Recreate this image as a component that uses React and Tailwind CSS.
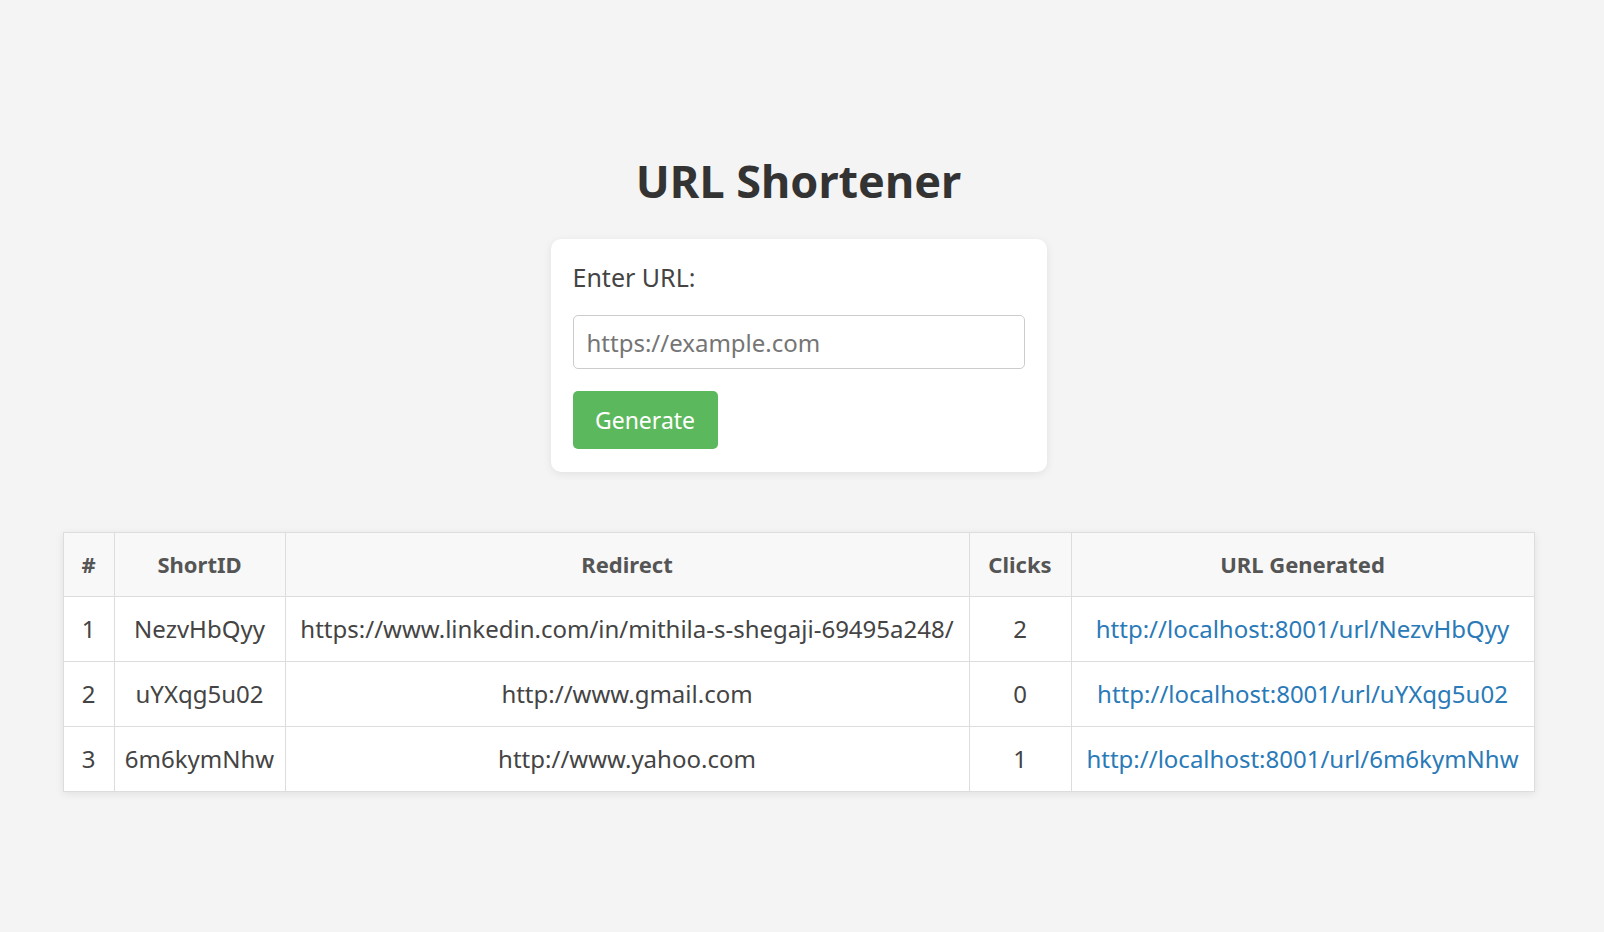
import { useState } from 'react';

const rows = [
  { id: 1, shortId: 'NezvHbQyy', redirect: 'https://www.linkedin.com/in/mithila-s-shegaji-69495a248/', clicks: 2 },
  { id: 2, shortId: 'uYXqg5u02', redirect: 'http://www.gmail.com', clicks: 0 },
  { id: 3, shortId: '6m6kymNhw', redirect: 'http://www.yahoo.com', clicks: 1 },
];

export default function App() {
  const [url, setUrl] = useState('');

  return (
    <div className="min-h-screen bg-[#f4f4f4] text-[#444] font-['Noto_Sans',sans-serif] pt-[153px] pr-[7px]">
      <h1 className="text-center text-[45px] leading-[56px] font-bold text-[#333]">URL Shortener</h1>

      <form
        className="w-[496px] mx-auto mt-[30px] bg-white rounded-[10px] px-[22px] pt-[22px] pb-[23px] shadow-[0_2px_8px_rgba(0,0,0,0.08)]"
        onSubmit={e => e.preventDefault()}
      >
        <label className="block text-[25px] leading-[32px] text-[#444]">Enter URL:</label>
        <input
          type="text"
          value={url}
          onChange={e => setUrl(e.target.value)}
          placeholder="https://example.com"
          className="mt-[22px] block w-full h-[54px] px-[13px] text-[24px] border border-[#ccc] rounded-[5px] bg-white placeholder:text-[#757575] outline-none"
        />
        <button
          type="submit"
          className="mt-[22px] w-[145px] h-[58px] bg-[#5cb85c] text-white text-[23px] rounded-[5px]"
        >
          Generate
        </button>
      </form>

      <table className="table-fixed w-[1471px] mx-auto mt-[60px] border-collapse bg-white shadow-[0_2px_8px_rgba(0,0,0,0.08)] text-[24px]">
        <colgroup>
          <col className="w-[51px]" />
          <col className="w-[171px]" />
          <col className="w-[684px]" />
          <col className="w-[102px]" />
          <col className="w-[463px]" />
        </colgroup>
        <thead>
          <tr className="bg-[#f8f8f8] h-[64px]">
            {['#', 'ShortID', 'Redirect', 'Clicks', 'URL Generated'].map(h => (
              <th key={h} className="border border-[#ddd] text-[22px] font-bold text-[#555] text-center">{h}</th>
            ))}
          </tr>
        </thead>
        <tbody>
          {rows.map(r => (
            <tr key={r.id} className="h-[65px]">
              <td className="border border-[#ddd] text-center">{r.id}</td>
              <td className="border border-[#ddd] text-center">{r.shortId}</td>
              <td className="border border-[#ddd] text-center whitespace-nowrap">{r.redirect}</td>
              <td className="border border-[#ddd] text-center">{r.clicks}</td>
              <td className="border border-[#ddd] text-center whitespace-nowrap">
                <a href={`http://localhost:8001/url/${r.shortId}`} className="text-[#2a7ab8]">
                  http://localhost:8001/url/{r.shortId}
                </a>
              </td>
            </tr>
          ))}
        </tbody>
      </table>
    </div>
  );
}
